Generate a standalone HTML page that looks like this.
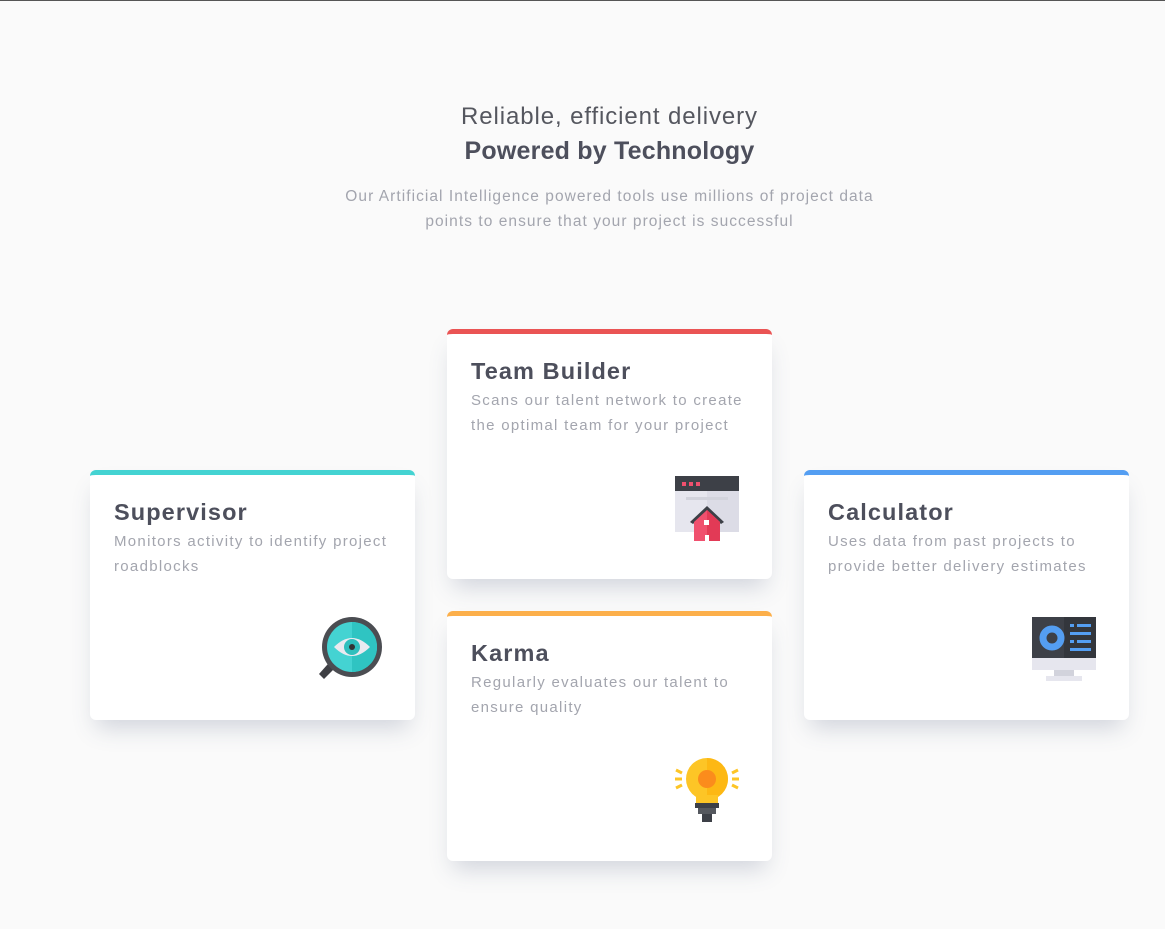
<!DOCTYPE html>
<html><head><meta charset="utf-8"><style>
*{margin:0;padding:0;box-sizing:border-box}
html,body{width:1165px;height:929px;overflow:hidden}
body{background:#fafafa;font-family:"Liberation Sans",sans-serif;position:relative}
.topline{position:absolute;left:0;top:0;width:1165px;height:1px;background:#555}
.h1{position:absolute;left:0;width:1219px;text-align:center;color:#4d4f5c}
.l1{top:103px;font-size:24px;font-weight:normal;letter-spacing:0.9px;color:#55575f}
.l2{top:137px;font-size:25px;font-weight:bold;letter-spacing:0.2px}
.p{position:absolute;left:0;width:1219px;top:184px;text-align:center;color:#a3a5ae;font-size:15.5px;line-height:25px;letter-spacing:1.05px}
.card{position:absolute;width:325px;height:250px;background:#fff;border-radius:6px;border-top:5px solid;box-shadow:0 14px 22px -6px rgba(70,80,120,.22);padding:22px 24px}
.card h2{font-size:23.5px;color:#4d4f5c;font-weight:bold;line-height:30px;letter-spacing:1.1px}
.card p{font-size:15px;color:#a3a5ae;line-height:25px;letter-spacing:1.3px;margin-top:2px;white-space:nowrap}
.card svg{position:absolute;right:32px;bottom:38px}
</style></head><body>
<div class="topline"></div>
<div class="h1 l1">Reliable, efficient delivery</div>
<div class="h1 l2">Powered by Technology</div>
<div class="p">Our Artificial Intelligence powered tools use millions of project data<br>points to ensure that your project is successful</div>

<div class="card" style="left:90px;top:470px;border-color:#44d3d2">
<h2>Supervisor</h2><p>Monitors activity to identify project<br>roadblocks</p>
<svg width="66" height="66" viewBox="0 0 66 66"><path d="M18 40 L2 58 L7 63 L24 46Z" fill="#3e3f44"/><circle cx="35" cy="31" r="30" fill="#4b4d52"/><circle cx="35" cy="31" r="25" fill="#44d3d2"/><path d="M35 6 A25 25 0 0 1 35 56Z" fill="#2fc4c2"/><path d="M17 31 Q35 13 53 31 Q35 49 17 31Z" fill="#eaeaf0"/><circle cx="35" cy="31" r="8" fill="#2fbfbd"/><circle cx="35" cy="31" r="3" fill="#333"/></svg>
</div>

<div class="card" style="left:447px;top:329px;border-color:#ea5454">
<h2>Team Builder</h2><p>Scans our talent network to create<br>the optimal team for your project</p>
<svg width="66" height="66" viewBox="0 0 66 66"><rect x="1" y="1" width="64" height="56" fill="#e6e6ee"/><rect x="33" y="1" width="32" height="56" fill="#dcdce6"/><rect x="1" y="1" width="64" height="15" fill="#3d4047"/><rect x="8" y="7" width="4" height="4" fill="#f0506e"/><rect x="15" y="7" width="4" height="4" fill="#f0506e"/><rect x="22" y="7" width="4" height="4" fill="#f0506e"/><rect x="12" y="22" width="42" height="3" fill="#d2d3dc"/><path d="M16 47 L33 31 L50 47 L47 49 L33 36 L19 49Z" fill="#3d4047"/><path d="M20 47 L33 35 L46 47 V66 H20Z" fill="#f0506e"/><path d="M33 35 L46 47 V66 H33Z" fill="#e23a56"/><rect x="30" y="45" width="5" height="5" fill="#fff"/><rect x="31" y="60" width="4" height="6" fill="#fff"/></svg>
</div>

<div class="card" style="left:447px;top:611px;border-color:#fcaf4a">
<h2>Karma</h2><p>Regularly evaluates our talent to<br>ensure quality</p>
<svg width="66" height="66" viewBox="0 0 66 66"><circle cx="33" cy="22" r="21" fill="#fdc526"/><path d="M33 1 A21 21 0 0 1 33 43Z" fill="#fdb814"/><circle cx="33" cy="22" r="9" fill="#fb8c1c"/><path d="M22 38 H44 V48 H22Z" fill="#fdc526"/><rect x="21" y="46" width="24" height="5" fill="#3d4047"/><rect x="24" y="51" width="18" height="6" fill="#55585e"/><rect x="28" y="57" width="10" height="8" fill="#3d4047"/><path d="M2 13 L8 16 M1 22 H8 M2 31 L8 28 M64 13 L58 16 M65 22 H58 M64 31 L58 28" stroke="#fdc526" stroke-width="3"/></svg>
</div>

<div class="card" style="left:804px;top:470px;border-color:#549ef2">
<h2>Calculator</h2><p>Uses data from past projects to<br>provide better delivery estimates</p>
<svg width="66" height="66" viewBox="0 0 66 66"><rect x="1" y="1" width="64" height="42" fill="#3d4047"/><rect x="33" y="1" width="32" height="42" fill="#33363c"/><rect x="1" y="42" width="64" height="12" fill="#e6e6ee"/><rect x="23" y="54" width="20" height="7" fill="#d2d3dc"/><rect x="15" y="60" width="36" height="5" fill="#e6e6ee"/><circle cx="21" cy="22" r="9" fill="none" stroke="#549ef2" stroke-width="7"/><g fill="#549ef2"><rect x="39" y="8" width="4" height="3"/><rect x="46" y="8" width="14" height="3"/><rect x="39" y="16" width="21" height="3"/><rect x="39" y="24" width="4" height="3"/><rect x="46" y="24" width="14" height="3"/><rect x="39" y="32" width="21" height="3"/></g></svg>
</div>
</body></html>
